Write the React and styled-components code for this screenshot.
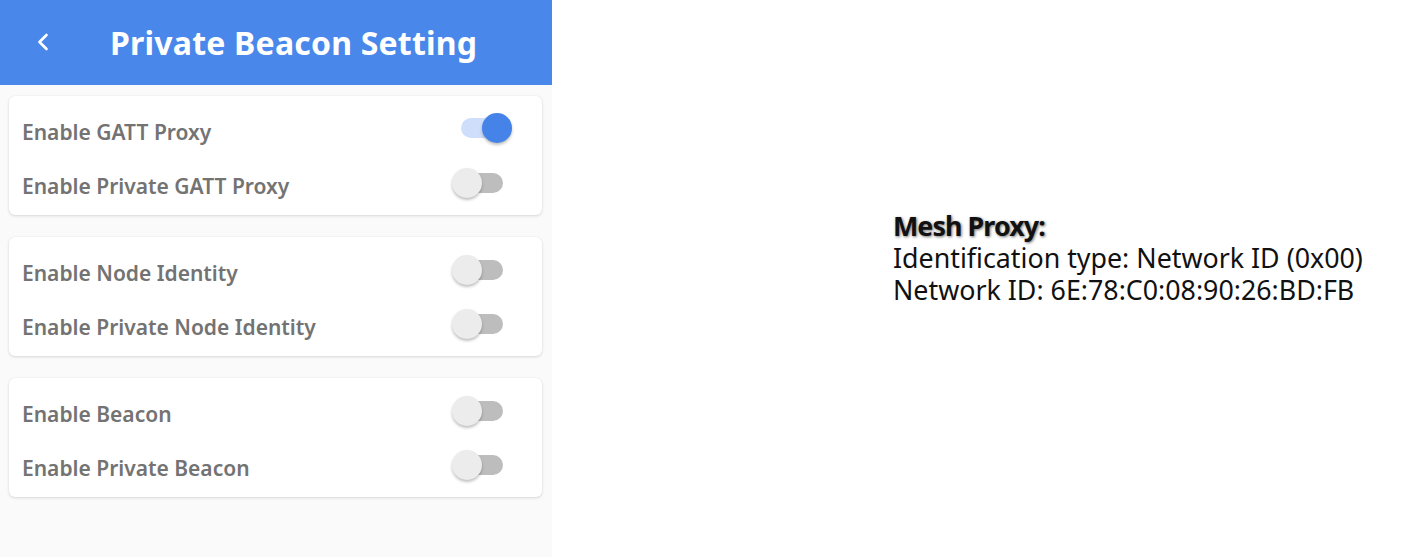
import React, { useState } from "react";
import styled, { createGlobalStyle } from "styled-components";

const Global = createGlobalStyle`
  html, body { margin: 0; padding: 0; background: #ffffff; }
  body { font-family: "Noto Sans", "Open Sans", sans-serif; }
`;

const Page = styled.div`
  display: flex;
  height: 557px;
  width: 1417px;
  overflow: hidden;
`;

const Phone = styled.div`
  width: 552px;
  flex: none;
  background: #fafafa;
  display: flex;
  flex-direction: column;
`;

const Header = styled.header`
  height: 85px;
  background: #4a87ea;
  display: flex;
  align-items: center;
  padding-left: 34px;
  box-sizing: border-box;
`;

const Back = styled.button`
  all: unset;
  width: 18px;
  height: 24px;
  display: flex;
  align-items: center;
  justify-content: center;
  margin-right: 58px;
  margin-top: -2px;
`;

const Title = styled.h1`
  margin: 0;
  color: #ffffff;
  font-family: "Noto Sans", sans-serif;
  font-weight: 700;
  font-size: 32px;
  letter-spacing: 0.2px;
`;

const List = styled.div`
  display: flex;
  flex-direction: column;
  gap: 22px;
  padding: 11px 10px 0 9px;
`;

const Card = styled.section`
  background: #ffffff;
  border-radius: 6px;
  box-shadow: 0 1px 3px rgba(0, 0, 0, 0.14), 0 0 1px rgba(0, 0, 0, 0.08);
  padding: 8px 30px 3px 13px;
  display: flex;
  flex-direction: column;
`;

const Row = styled.div`
  height: 54px;
  display: flex;
  align-items: center;
  justify-content: space-between;
`;

const Label = styled.span`
  font-family: "Noto Sans", sans-serif;
  font-weight: 600;
  font-size: 21px;
  color: #737373;
  margin-top: 1px;
`;

const SwitchBox = styled.button`
  all: unset;
  position: relative;
  width: 60px;
  height: 32px;
  cursor: pointer;
  margin-top: ${(p) => (p.$on ? "-6px" : "-4px")};
`;

const Track = styled.span`
  position: absolute;
  left: 9px;
  top: 6px;
  width: 42px;
  height: 20px;
  border-radius: 10px;
  background: ${(p) => (p.$on ? "#cfdefb" : "#bdbdbd")};
`;

const Thumb = styled.span`
  position: absolute;
  top: 1px;
  left: ${(p) => (p.$on ? "30px" : "0px")};
  width: 30px;
  height: 30px;
  border-radius: 50%;
  background: ${(p) => (p.$on ? "#4683e8" : "#ececec")};
  box-shadow: 0 2px 3px rgba(0, 0, 0, 0.25);
`;

const Info = styled.div`
  flex: 1;
  display: flex;
  flex-direction: column;
  justify-content: flex-start;
  padding: 210px 0 0 341px;
  font-family: "Noto Sans", sans-serif;
  font-size: 26.8px;
  line-height: 32px;
  color: #111111;
`;

const InfoTitle = styled.div`
  font-weight: 700;
  color: #111;
  text-shadow: 1px 1px 3px rgba(0, 0, 0, 0.55);
  letter-spacing: -0.9px;
`;

const InfoLine = styled.div`
  font-weight: 400;
  white-space: nowrap;
`;

function Toggle({ on }) {
  const [v, setV] = useState(on);
  return (
    <SwitchBox $on={v} onClick={() => setV(!v)} aria-pressed={v}>
      <Track $on={v} />
      <Thumb $on={v} />
    </SwitchBox>
  );
}

const groups = [
  [
    ["Enable GATT Proxy", true],
    ["Enable Private GATT Proxy", false],
  ],
  [
    ["Enable Node Identity", false],
    ["Enable Private Node Identity", false],
  ],
  [
    ["Enable Beacon", false],
    ["Enable Private Beacon", false],
  ],
];

export default function App() {
  return (
    <>
      <Global />
      <Page>
        <Phone>
          <Header>
            <Back aria-label="back">
              <svg width="14" height="18" viewBox="0 0 14 18" fill="none">
                <path d="M10.5 2 L3.5 9 L10.5 16" stroke="#fff" strokeWidth="2.6" strokeLinecap="round" strokeLinejoin="round" />
              </svg>
            </Back>
            <Title>Private Beacon Setting</Title>
          </Header>
          <List>
            {groups.map((g, i) => (
              <Card key={i}>
                {g.map(([label, on]) => (
                  <Row key={label}>
                    <Label>{label}</Label>
                    <Toggle on={on} />
                  </Row>
                ))}
              </Card>
            ))}
          </List>
        </Phone>
        <Info>
          <InfoTitle>Mesh Proxy:</InfoTitle>
          <InfoLine>Identification type: Network ID (0x00)</InfoLine>
          <InfoLine>Network ID: 6E:78:C0:08:90:26:BD:FB</InfoLine>
        </Info>
      </Page>
    </>
  );
}
